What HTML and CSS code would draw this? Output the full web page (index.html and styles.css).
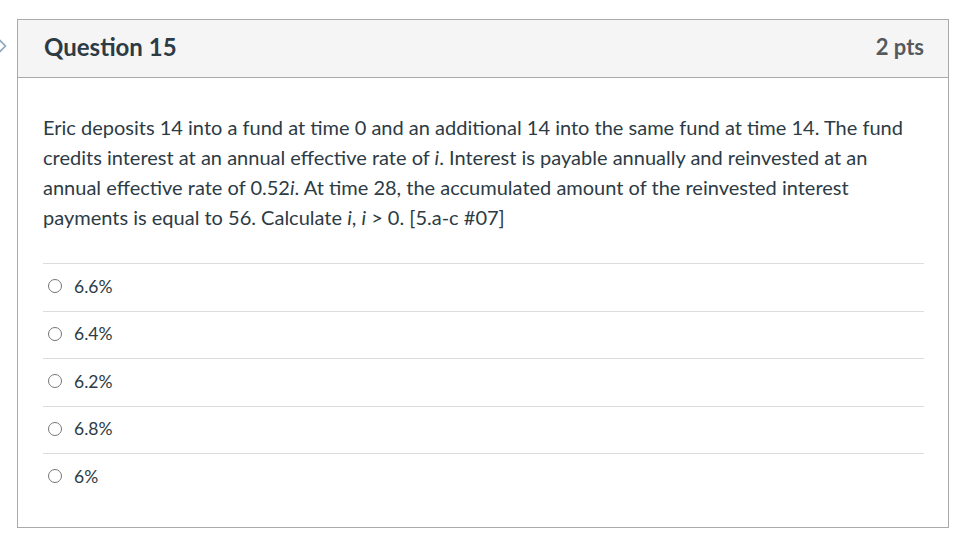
FILE: index.html
```html
<!DOCTYPE html>
<html>
<head>
<meta charset="utf-8">
<link rel="stylesheet" href="styles.css">
</head>
<body>
<div class="page">
  <svg class="chevron" width="10" height="16" viewBox="0 0 10 16"><path d="M-1 1.5 L5.5 8 L-1 14.5" fill="none" stroke="#8fa7bd" stroke-width="1.6"/></svg>
  <div class="question">
    <div class="header">
      <span class="title">Question 15</span>
      <span class="points">2 pts</span>
    </div>
    <div class="body">
      <p class="text">Eric deposits 14 into a fund at time 0 and an additional 14 into the same fund at time 14. The fund credits interest at an annual effective rate of <i>i</i>. Interest is payable annually and reinvested at an annual effective rate of 0.52<i>i</i>. At time 28, the accumulated amount of the reinvested interest payments is equal to 56. Calculate <i>i</i>, <i>i</i> &gt; 0. [5.a-c #07]</p>
      <div class="answers">
        <label class="answer"><span class="radio"></span>6.6%</label>
        <label class="answer"><span class="radio"></span>6.4%</label>
        <label class="answer"><span class="radio"></span>6.2%</label>
        <label class="answer"><span class="radio"></span>6.8%</label>
        <label class="answer"><span class="radio"></span>6%</label>
      </div>
    </div>
  </div>
</div>
</body>
</html>
```

FILE: styles.css
```css
html, body {
  margin: 0;
  padding: 0;
  background: #fff;
}
body {
  font-family: Lato, "Noto Sans", sans-serif;
  color: #2d3b45;
}
.page {
  position: relative;
  padding: 19px 15px 0 17px;
  width: 963px;
  box-sizing: border-box;
}
.chevron {
  position: absolute;
  left: 0;
  top: 38px;
}
.question {
  width: 932px;
  height: 509px;
  box-sizing: border-box;
  border: 1px solid #aaaaaa;
}
.header {
  height: 58px;
  box-sizing: border-box;
  background: #f5f5f5;
  border-bottom: 1px solid #aaaaaa;
  display: flex;
  align-items: center;
  justify-content: space-between;
  padding: 0 24px 4px 26px;
}
.title {
  font-size: 24px;
  font-weight: bold;
  color: #2d3b45;
}
.points {
  font-size: 22px;
  font-weight: bold;
  color: #555a5e;
}
.body {
  padding: 34px 24px 0 25px;
}
.text {
  margin: 0;
  font-size: 20px;
  line-height: 30px;
}
.answers {
  margin-top: 31px;
}
.answer {
  display: flex;
  align-items: center;
  gap: 12px;
  height: 47.5px;
  box-sizing: border-box;
  border-top: 1px solid #dddddd;
  font-size: 17.5px;
  padding-left: 5px;
  padding-bottom: 2px;
}
.radio {
  width: 14px;
  height: 14px;
  border: 1.5px solid #777;
  border-radius: 50%;
  box-sizing: border-box;
  flex: none;
}
```
